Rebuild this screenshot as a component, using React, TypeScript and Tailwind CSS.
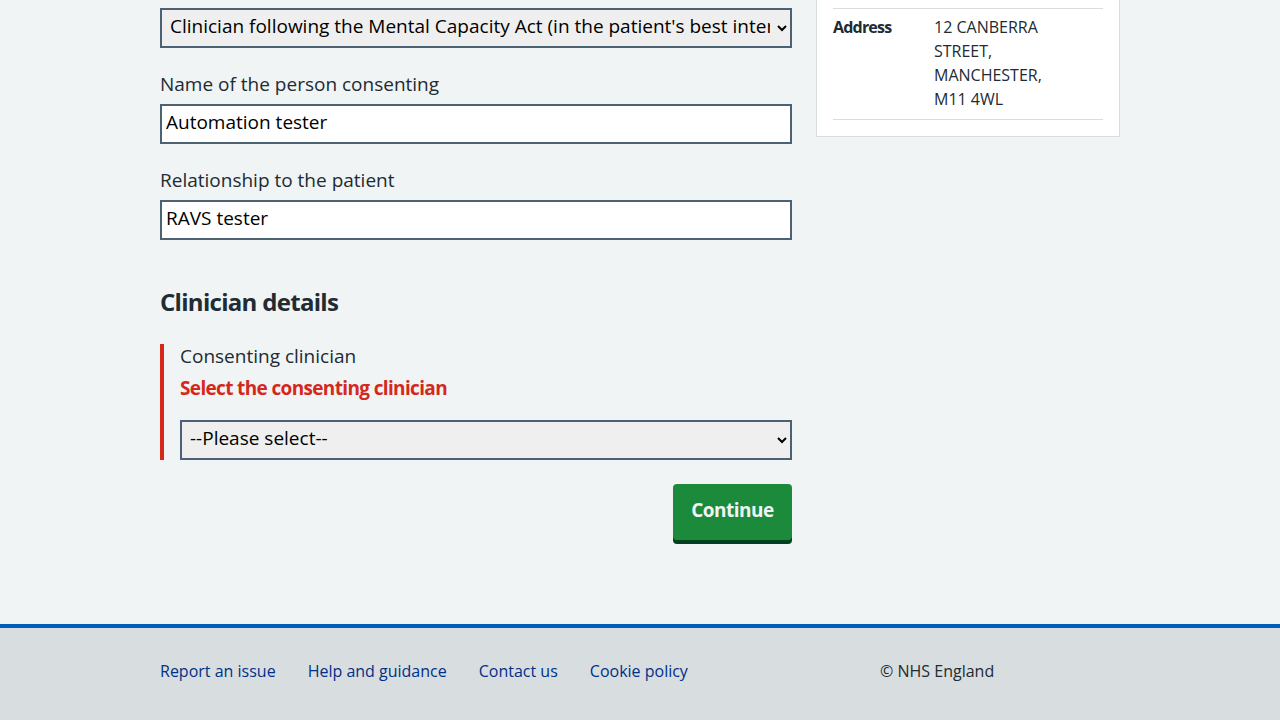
import React from "react";

const FONT = "[font-family:'Open_Sans',Arial,sans-serif]";

const FOOTER_LINKS = ["Report an issue", "Help and guidance", "Contact us", "Cookie policy"];

function TextField({ label, value }: { label: string; value: string }) {
  return (
    <div className="mb-6">
      <label className="mb-2 block text-[19px] leading-[24px] text-[#212b32]">{label}</label>
      <input
        readOnly
        value={value}
        className="block h-10 w-full border-2 border-[#4c6272] bg-white px-1 pt-0 pb-[4px] text-[19px] text-black outline-none"
      />
    </div>
  );
}

export default function App() {
  return (
    <div className={`flex min-h-screen flex-col bg-[#f0f4f5] ${FONT}`}>
      <main className="mx-auto flex w-[960px] gap-6">
        {/* Form column */}
        <div className="w-[632px] pt-2">
          <div className="mb-6">
            <select
              defaultValue="mca"
              className="block h-10 w-full border-2 border-[#4c6272] bg-[#efefef] px-1 pt-0 pb-[4px] text-[19px] text-black"
            >
              <option value="mca">
                Clinician following the Mental Capacity Act (in the patient's best interests)
              </option>
            </select>
          </div>

          <TextField label="Name of the person consenting" value="Automation tester" />
          <TextField label="Relationship to the patient" value="RAVS tester" />

          <h2 className="mt-[46px] mb-[26px] text-[24px] font-bold leading-[32px] tracking-[-0.7px] text-[#212b32]">
            Clinician details
          </h2>

          <div className="border-l-4 border-[#d5281b] pl-4">
            <label className="mb-2 block text-[19px] leading-[24px] text-[#212b32]">
              Consenting clinician
            </label>
            <p className="mb-5 text-[19px] font-bold leading-[24px] tracking-[-0.65px] text-[#d5281b]">
              Select the consenting clinician
            </p>
            <select
              defaultValue=""
              className="block h-10 w-full border-2 border-[#4c6272] bg-[#efefef] px-1 pt-0 pb-[4px] text-[19px] text-black"
            >
              <option value="">--Please select--</option>
            </select>
          </div>

          <div className="mt-6 flex justify-end">
            <button className="h-14 w-[119px] rounded-[4px] bg-[#1c8a3b] pb-1 text-[19px] font-bold tracking-[-0.5px] text-[#f0f4f5] shadow-[0_4px_0_#00401e]">
              Continue
            </button>
          </div>
        </div>

        {/* Patient summary */}
        <aside className="w-[304px] self-start">
          <div className="border border-t-0 border-[#d8dde0] bg-white px-4 pt-2 pb-4">
            <dl className="flex border-y border-[#d8dde0] pt-[6px] pb-[8px] text-[16px] leading-[24px] text-[#212b32]">
              <dt className="w-[101px] font-bold tracking-[-0.8px]">Address</dt>
              <dd className="w-[120px]">12 CANBERRA STREET, MANCHESTER, M11 4WL</dd>
            </dl>
          </div>
        </aside>
      </main>

      <footer className="mt-[84px] flex-1 border-t-4 border-[#005eb8] bg-[#d8dde0] pt-[31px] pb-10">
        <div className="mx-auto flex w-[960px]">
          <ul className="flex w-[720px] gap-8 text-[16px] leading-[24px]">
            {FOOTER_LINKS.map((link) => (
              <li key={link}>
                <a href="#" className="text-[#003087]">
                  {link}
                </a>
              </li>
            ))}
          </ul>
          <p className="text-[16px] leading-[24px] text-[#212b32]">© NHS England</p>
        </div>
      </footer>
    </div>
  );
}
